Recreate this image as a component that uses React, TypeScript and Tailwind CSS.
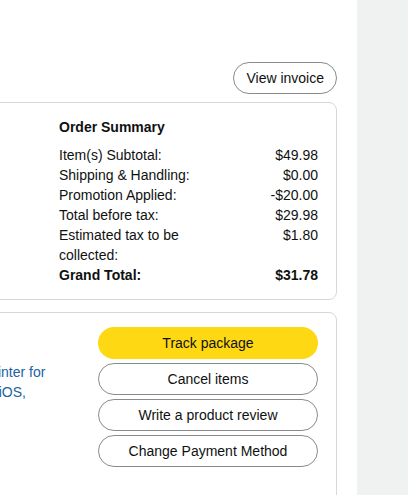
import React from "react";

const summaryRows = [
  { label: "Item(s) Subtotal:", value: "$49.98" },
  { label: "Shipping & Handling:", value: "$0.00" },
  { label: "Promotion Applied:", value: "-$20.00" },
  { label: "Total before tax:", value: "$29.98" },
  { label: "Estimated tax to be collected:", value: "$1.80" },
];

const actions = ["Cancel items", "Write a product review", "Change Payment Method"];

const App = () => {
  return (
    <div
      className="flex min-h-screen w-[408px] overflow-hidden text-[14px] leading-5 text-[#0f1111]"
      style={{ fontFamily: '"Liberation Sans", Arial, sans-serif' }}
    >
      <div className="w-[357px] shrink-0 bg-white pr-5 pt-[62px]">
        <div className="flex justify-end">
          <button className="h-8 rounded-full border border-[#888c8c] bg-white px-3 text-[14px] text-[#0f1111]">
            View invoice
          </button>
        </div>

        <div className="-ml-[200px]">
          {/* order summary card */}
          <div className="mt-2 flex rounded-lg border border-[#d5d9d9] py-[14px] pl-[18px] pr-[18px]">
            <div className="flex-1" />
            <div className="w-[259px]">
              <h3 className="mb-2 font-bold">Order Summary</h3>
              {summaryRows.map((row) => (
                <div key={row.label} className="flex justify-between">
                  <span className="w-[58%]">{row.label}</span>
                  <span className="text-right">{row.value}</span>
                </div>
              ))}
              <div className="flex justify-between font-bold">
                <span>Grand Total:</span>
                <span>$31.78</span>
              </div>
            </div>
          </div>

          {/* shipment card */}
          <div className="mt-3 flex min-h-[200px] rounded-lg border border-[#d5d9d9] pb-4 pl-[18px] pr-[18px] pt-[14px]">
            <div className="flex flex-1 gap-4">
              <div className="h-[90px] w-[110px] shrink-0" />
              <div className="pt-[35px]">
                <a className="text-[#2162a1]">
                  Laser Printer for
                  <br />
                  PC/Mac/iOS,
                </a>
              </div>
            </div>
            <div className="flex w-[220px] flex-col gap-1">
              <button className="h-8 rounded-full bg-[#ffd814] text-[14px] text-[#0f1111]">
                Track package
              </button>
              {actions.map((a) => (
                <button
                  key={a}
                  className="h-8 rounded-full border border-[#888c8c] bg-white text-[14px] text-[#0f1111]"
                >
                  {a}
                </button>
              ))}
            </div>
          </div>
        </div>
      </div>
      <div className="flex-1 bg-[#f0f2f2]" />
    </div>
  );
};

export default App;
